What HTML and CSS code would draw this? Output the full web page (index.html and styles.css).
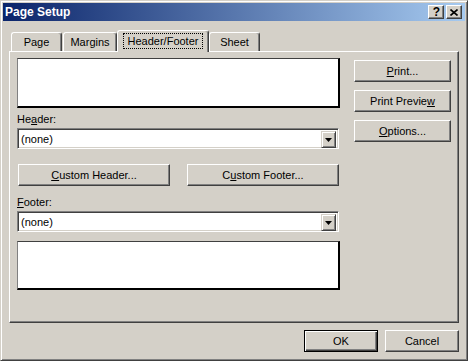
FILE: index.html
```html
<!DOCTYPE html>
<html>
<head>
<meta charset="utf-8">
<title>Page Setup</title>
<link rel="stylesheet" href="styles.css">
</head>
<body>
<div class="window">
  <div class="titlebar">
    <span class="title">Page Setup</span>
    <div class="tbtns">
      <span class="tbtn help">?</span>
      <span class="tbtn close"><svg width="8" height="7" viewBox="0 0 8 7"><path d="M0.5 0.5 L7.5 6.5 M7.5 0.5 L0.5 6.5" stroke="#000" stroke-width="1.6" fill="none"/></svg></span>
    </div>
  </div>
  <div class="body">
    <div class="tabs">
      <div class="tab t-page">Page</div>
      <div class="tab t-margins">Margins</div>
      <div class="tab active t-hf"><span class="focus">Header/Footer</span></div>
      <div class="tab t-sheet">Sheet</div>
    </div>
    <div class="panel">
      <div class="left">
        <div class="preview"></div>
        <div class="lbl">He<u>a</u>der:</div>
        <div class="combo"><span class="val">(none)</span><span class="drop"><svg width="7" height="4" viewBox="0 0 7 4"><polygon points="0,0 7,0 3.5,4" fill="#000"/></svg></span></div>
        <div class="custom-row">
          <button class="btn custom"><u>C</u>ustom Header...</button>
          <button class="btn custom">C<u>u</u>stom Footer...</button>
        </div>
        <div class="lbl lbl-footer"><u>F</u>ooter:</div>
        <div class="combo"><span class="val">(none)</span><span class="drop"><svg width="7" height="4" viewBox="0 0 7 4"><polygon points="0,0 7,0 3.5,4" fill="#000"/></svg></span></div>
        <div class="preview footer-prev"></div>
      </div>
      <div class="right">
        <button class="btn side"><u>P</u>rint...</button>
        <button class="btn side">Print Previe<u>w</u></button>
        <button class="btn side"><u>O</u>ptions...</button>
      </div>
    </div>
    <div class="actions">
      <button class="btn act default">OK</button>
      <button class="btn act">Cancel</button>
    </div>
  </div>
</div>
</body>
</html>
```

FILE: styles.css
```css
* { box-sizing: border-box; }
body {
  margin: 0;
  background: #d4d0c8;
  font-family: "Liberation Sans", Arial, sans-serif;
  font-size: 11px;
  color: #000;
}
.window {
  width: 468px;
  height: 361px;
  border: 1px solid;
  border-color: #d4d0c8 #404040 #404040 #d4d0c8;
  box-shadow: inset 1px 1px #fff, inset -1px -1px #808080;
  padding: 2px;
  background: #d4d0c8;
  display: flex;
  flex-direction: column;
}
.titlebar {
  height: 18px;
  flex: none;
  background: linear-gradient(to right, #0a246a, #a6caf0);
  display: flex;
  align-items: center;
  justify-content: space-between;
  padding: 0 3px 0 2px;
}
.title {
  color: #fff;
  font-weight: bold;
  font-size: 12px;
  line-height: 18px;
}
.tbtns { display: flex; gap: 2px; }
.tbtn {
  width: 16px;
  height: 14px;
  background: #d4d0c8;
  border: 1px solid;
  border-color: #fff #404040 #404040 #fff;
  box-shadow: inset -1px -1px #808080;
  display: flex;
  align-items: center;
  justify-content: center;
}
.help {
  font-weight: bold;
  font-size: 12px;
  line-height: 12px;
  padding-left: 1px;
}
.body {
  padding: 0 6px;
  display: flex;
  flex-direction: column;
}
.tabs {
  margin-top: 9px;
  height: 21px;
  display: flex;
  align-items: flex-end;
  position: relative;
  z-index: 2;
}
.tab {
  height: 19px;
  background: #d4d0c8;
  border: 1px solid;
  border-bottom: none;
  border-color: #fff #404040 #404040 #fff;
  box-shadow: inset -1px 0 #808080;
  border-radius: 3px 3px 0 0;
  display: flex;
  justify-content: center;
  align-items: flex-start;
  padding-top: 3px;
  line-height: 13px;
}
.t-page { width: 51px; margin-left: 2px; }
.t-margins { width: 54px; margin-left: 1px; }
.t-hf { width: 92px; }
.t-sheet { width: 51px; }
.tab.active {
  height: 22px;
  margin-bottom: -1px;
  padding-top: 2px;
}
.focus {
  display: inline-block;
  border: 1px dotted #000;
  padding: 1px 4px 0 4px;
  line-height: 13px;
}
.panel {
  height: 272px;
  border: 1px solid;
  border-color: #fff #404040 #404040 #fff;
  box-shadow: inset -1px -1px #808080;
  padding: 6px 6px 0 7px;
  display: grid;
  grid-template-columns: 323px 97px;
  column-gap: 14px;
  align-items: start;
}
.left { display: flex; flex-direction: column; }
.preview {
  height: 50px;
  background: #fff;
  border-left: 1px solid #808080;
  border-top: 1px solid #404040;
  border-right: 2px solid #000;
  border-bottom: 2px solid #000;
}
.footer-prev { height: 49px; margin-top: 9px; }
.lbl {
  line-height: 13px;
  margin-top: 5px;
  margin-bottom: 2px;
}
.lbl-footer { margin-top: 10px; }
.combo {
  height: 21px;
  width: 322px;
  border: 1px solid;
  border-color: #808080 #fff #fff #808080;
  box-shadow: inset 1px 1px #404040, inset -1px -1px #d4d0c8;
  background: #fff;
  padding: 2px;
  display: flex;
}
.val {
  flex: 1;
  padding-left: 1px;
  line-height: 17px;
}
.drop {
  width: 15px;
  height: 17px;
  background: #d4d0c8;
  border: 1px solid;
  border-color: #d4d0c8 #404040 #404040 #d4d0c8;
  box-shadow: inset 1px 1px #fff, inset -1px -1px #808080;
  display: flex;
  align-items: center;
  justify-content: center;
}
.custom-row {
  margin-top: 15px;
  display: flex;
  gap: 17px;
  padding: 0 1px;
}
.btn {
  height: 22px;
  background: #d4d0c8;
  border: 1px solid;
  border-color: #fff #404040 #404040 #fff;
  box-shadow: inset -1px -1px #808080;
  font: inherit;
  color: #000;
  padding: 0;
  line-height: 13px;
  text-align: center;
}
.custom { width: 152px; }
.right {
  padding-top: 2px;
  display: flex;
  flex-direction: column;
  gap: 8px;
}
.side { width: 97px; }
.actions {
  margin-top: 7px;
  display: flex;
  justify-content: flex-end;
  gap: 7px;
}
.act { width: 74px; }
.btn.default {
  border: 1px solid #000;
  box-shadow: inset 1px 1px #fff, inset -1px -1px #404040, inset -2px -2px #808080;
}
```
